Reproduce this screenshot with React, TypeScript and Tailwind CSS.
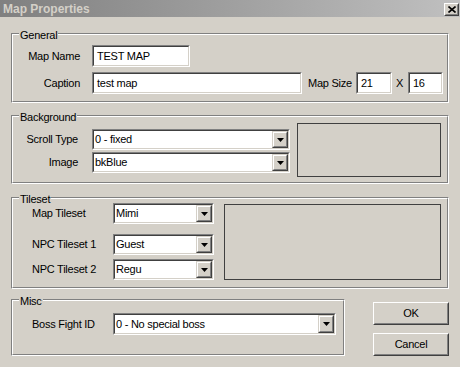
import React from 'react';

const face = 'bg-[#d4d0c8]';

const Sunken = ({ className = '', children }: { className?: string; children?: React.ReactNode }) => (
  <div className={`border border-t-[#808080] border-l-[#808080] border-b-white border-r-white ${className}`}>
    <div className="h-full flex items-center border border-t-[#404040] border-l-[#404040] border-b-[#d4d0c8] border-r-[#d4d0c8] bg-white">
      {children}
    </div>
  </div>
);

const Arrow = () => (
  <svg width="7" height="4" viewBox="0 0 7 4">
    <path d="M0 0h7L3.5 4z" fill="#000" />
  </svg>
);

const Combo = ({ value, className = '' }: { value: string; className?: string }) => (
  <Sunken className={className}>
    <span className="flex-1 pl-[1px] whitespace-nowrap">{value}</span>
    <div className="h-full w-[16px] border border-t-[#d4d0c8] border-l-[#d4d0c8] border-b-[#404040] border-r-[#404040]">
      <div className={`h-full flex items-center justify-center border border-t-white border-l-white border-b-[#808080] border-r-[#808080] ${face}`}>
        <Arrow />
      </div>
    </div>
  </Sunken>
);

const Edit = ({ value, className = '' }: { value: string; className?: string }) => (
  <Sunken className={className}>
    <span className="pl-[3px] whitespace-nowrap">{value}</span>
  </Sunken>
);

const Group = ({ title, className = '', children }: { title: string; className?: string; children?: React.ReactNode }) => (
  <div className={`relative border border-t-[#808080] border-l-[#808080] border-b-white border-r-white ${className}`}>
    <div className="h-full border border-t-white border-l-white border-b-[#808080] border-r-[#808080]">{children}</div>
    <span className={`absolute top-[-5px] left-[7px] px-[1px] leading-[13px] ${face}`}>{title}</span>
  </div>
);

const Button = ({ label, className = '' }: { label: string; className?: string }) => (
  <div className={`border border-t-white border-l-white border-b-[#404040] border-r-[#404040] ${className}`}>
    <div className={`h-full flex items-center justify-center border border-t-[#d4d0c8] border-l-[#d4d0c8] border-b-[#808080] border-r-[#808080] ${face}`}>
      {label}
    </div>
  </div>
);

export default function App() {
  return (
    <div className={`w-[460px] h-[367px] overflow-hidden text-[11px] tracking-[-0.25px] text-black font-['Liberation_Sans',Arial,sans-serif] ${face}`}>
      {/* title bar (inactive) */}
      <div className="h-[17px] flex items-center justify-between pl-[3px] pr-[1px] bg-linear-to-r from-[#808080] to-[#c0c0c0]">
        <span className="text-[12px] font-bold tracking-normal text-[#d4d0c8] leading-none">Map Properties</span>
        <div className="w-[15px] h-[13px] mt-[1px] border border-t-white border-l-white border-b-[#404040] border-r-[#404040]">
          <div className={`h-full flex items-center justify-center border border-t-[#d4d0c8] border-l-[#d4d0c8] border-b-[#808080] border-r-[#808080] ${face}`}>
            <svg width="8" height="7" viewBox="0 0 8 7">
              <path d="M0.5 0.5L7.5 6.5M7.5 0.5L0.5 6.5" stroke="#000" strokeWidth="1.6" />
            </svg>
          </div>
        </div>
      </div>

      <div className="px-[11px]">
        <Group title="General" className="mt-[16px] h-[70px]">
          <div className="pt-[10px] flex flex-col gap-[5px]">
            <div className="flex items-center h-[22px]">
              <span className="w-[67px] text-right">Map Name</span>
              <Edit value="TEST MAP" className="ml-[12px] w-[98px] h-[22px]" />
            </div>
            <div className="flex items-center h-[22px]">
              <span className="w-[67px] text-right">Caption</span>
              <Edit value="test map" className="ml-[12px] w-[210px] h-[22px]" />
              <span className="ml-[6px] w-[48px] whitespace-nowrap">Map Size</span>
              <Edit value="21" className="w-[36px] h-[22px]" />
              <span className="ml-[4px] w-[12px]">X</span>
              <Edit value="16" className="w-[35px] h-[22px]" />
            </div>
          </div>
        </Group>

        <Group title="Background" className="mt-[12px] h-[69px]">
          <div className="flex items-start">
            <div className="pt-[12px] flex flex-col gap-[2px]">
              <div className="flex items-center h-[21px]">
                <span className="w-[65px] text-right">Scroll Type</span>
                <Combo value="0 - fixed" className="ml-[14px] w-[198px] h-[21px]" />
              </div>
              <div className="flex items-center h-[21px]">
                <span className="w-[65px] text-right">Image</span>
                <Combo value="bkBlue" className="ml-[14px] w-[198px] h-[21px]" />
              </div>
            </div>
            <div className="ml-[7px] mt-[6px] w-[144px] h-[54px] border border-[#404040]" />
          </div>
        </Group>

        <Group title="Tileset" className="mt-[13px] h-[92px]">
          <div className="flex items-start pl-[19px]">
            <div className="pt-[4px] flex flex-col">
              <div className="flex items-center h-[21px]">
                <span className="w-[81px]">Map Tileset</span>
                <Combo value="Mimi" className="w-[101px] h-[21px]" />
              </div>
              <div className="flex items-center h-[21px] mt-[10px]">
                <span className="w-[81px]">NPC Tileset 1</span>
                <Combo value="Guest" className="w-[101px] h-[21px]" />
              </div>
              <div className="flex items-center h-[21px] mt-[4px]">
                <span className="w-[81px]">NPC Tileset 2</span>
                <Combo value="Regu" className="w-[101px] h-[21px]" />
              </div>
            </div>
            <div className="ml-[10px] mt-[5px] w-[217px] h-[76px] border border-[#404040]" />
          </div>
        </Group>

        <div className="flex items-start">
          <Group title="Misc" className="mt-[10px] w-[338px] h-[57px]">
            <div className="pt-[12px] pl-[19px] flex items-center h-[34px]">
              <span className="w-[81px]">Boss Fight ID</span>
              <Combo value="0 - No special boss" className="w-[223px] h-[22px]" />
            </div>
          </Group>
          <div className="ml-[28px] mt-[13px] flex flex-col gap-[8px]">
            <Button label="OK" className="w-[76px] h-[23px]" />
            <Button label="Cancel" className="w-[76px] h-[23px]" />
          </div>
        </div>
      </div>
    </div>
  );
}
